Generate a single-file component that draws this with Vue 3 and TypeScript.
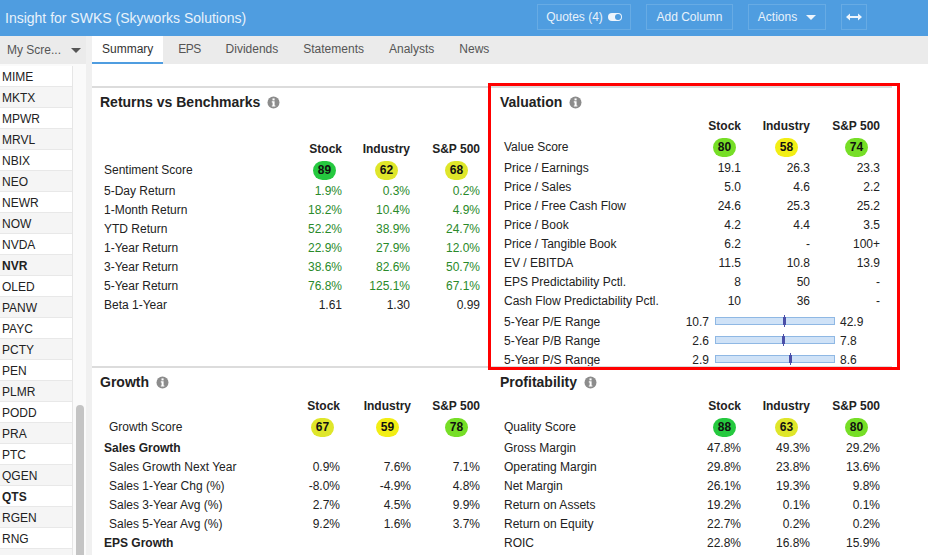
<script setup lang="ts">
interface Row {
  label: string;
  kind: 'score' | 'plain' | 'green' | 'group' | 'sub' | 'subscore' | 'range';
  values?: (string | number)[];
  low?: string;
  high?: string;
  pos?: number;
}

interface Panel {
  title: string;
  cls: string;
  rows: Row[];
}

const tickers = [
  'MIME', 'MKTX', 'MPWR', 'MRVL', 'NBIX', 'NEO', 'NEWR', 'NOW', 'NVDA', 'NVR', 'OLED', 'PANW',
  'PAYC', 'PCTY', 'PEN', 'PLMR', 'PODD', 'PRA', 'PTC', 'QGEN', 'QTS', 'RGEN', 'RNG', '',
];
const boldTickers = ['NVR', 'QTS'];
const tabs = ['Summary', 'EPS', 'Dividends', 'Statements', 'Analysts', 'News'];
const columns = ['Stock', 'Industry', 'S&P 500'];

const panels: Panel[] = [
  {
    title: 'Returns vs Benchmarks',
    cls: 'returns',
    rows: [
      { label: 'Sentiment Score', kind: 'score', values: [89, 62, 68] },
      { label: '5-Day Return', kind: 'green', values: ['1.9%', '0.3%', '0.2%'] },
      { label: '1-Month Return', kind: 'green', values: ['18.2%', '10.4%', '4.9%'] },
      { label: 'YTD Return', kind: 'green', values: ['52.2%', '38.9%', '24.7%'] },
      { label: '1-Year Return', kind: 'green', values: ['22.9%', '27.9%', '12.0%'] },
      { label: '3-Year Return', kind: 'green', values: ['38.6%', '82.6%', '50.7%'] },
      { label: '5-Year Return', kind: 'green', values: ['76.8%', '125.1%', '67.1%'] },
      { label: 'Beta 1-Year', kind: 'plain', values: ['1.61', '1.30', '0.99'] },
    ],
  },
  {
    title: 'Valuation',
    cls: 'side',
    rows: [
      { label: 'Value Score', kind: 'score', values: [80, 58, 74] },
      { label: 'Price / Earnings', kind: 'plain', values: ['19.1', '26.3', '23.3'] },
      { label: 'Price / Sales', kind: 'plain', values: ['5.0', '4.6', '2.2'] },
      { label: 'Price / Free Cash Flow', kind: 'plain', values: ['24.6', '25.3', '25.2'] },
      { label: 'Price / Book', kind: 'plain', values: ['4.2', '4.4', '3.5'] },
      { label: 'Price / Tangible Book', kind: 'plain', values: ['6.2', '-', '100+'] },
      { label: 'EV / EBITDA', kind: 'plain', values: ['11.5', '10.8', '13.9'] },
      { label: 'EPS Predictability Pctl.', kind: 'plain', values: ['8', '50', '-'] },
      { label: 'Cash Flow Predictability Pctl.', kind: 'plain', values: ['10', '36', '-'] },
      { label: '5-Year P/E Range', kind: 'range', low: '10.7', high: '42.9', pos: 57.6 },
      { label: '5-Year P/B Range', kind: 'range', low: '2.6', high: '7.8', pos: 57 },
      { label: '5-Year P/S Range', kind: 'range', low: '2.9', high: '8.6', pos: 62.6 },
    ],
  },
  {
    title: 'Growth',
    cls: 'growth',
    rows: [
      { label: 'Growth Score', kind: 'subscore', values: [67, 59, 78] },
      { label: 'Sales Growth', kind: 'group' },
      { label: 'Sales Growth Next Year', kind: 'sub', values: ['0.9%', '7.6%', '7.1%'] },
      { label: 'Sales 1-Year Chg (%)', kind: 'sub', values: ['-8.0%', '-4.9%', '4.8%'] },
      { label: 'Sales 3-Year Avg (%)', kind: 'sub', values: ['2.7%', '4.5%', '9.9%'] },
      { label: 'Sales 5-Year Avg (%)', kind: 'sub', values: ['9.2%', '1.6%', '3.7%'] },
      { label: 'EPS Growth', kind: 'group' },
    ],
  },
  {
    title: 'Profitability',
    cls: 'side',
    rows: [
      { label: 'Quality Score', kind: 'score', values: [88, 63, 80] },
      { label: 'Gross Margin', kind: 'plain', values: ['47.8%', '49.3%', '29.2%'] },
      { label: 'Operating Margin', kind: 'plain', values: ['29.8%', '23.8%', '13.6%'] },
      { label: 'Net Margin', kind: 'plain', values: ['26.1%', '19.3%', '9.8%'] },
      { label: 'Return on Assets', kind: 'plain', values: ['19.2%', '0.1%', '0.1%'] },
      { label: 'Return on Equity', kind: 'plain', values: ['22.7%', '0.2%', '0.2%'] },
      { label: 'ROIC', kind: 'plain', values: ['22.8%', '16.8%', '15.9%'] },
    ],
  },
];

const isScore = (row: Row) => row.kind === 'score' || row.kind === 'subscore';

const scoreClass = (score: number | string) => {
  const n = Number(score);
  if (n >= 85) return 'top';
  if (n >= 70) return 'high';
  if (n >= 60) return 'mid';
  return 'low';
};
</script>

<template>
  <div class="app">
    <header class="topbar">
      <div class="title">Insight for SWKS (Skyworks Solutions)</div>
      <div class="actions">
        <button class="btn quotes">
          Quotes (4)
          <span class="toggle"></span>
        </button>
        <button class="btn add">Add Column</button>
        <button class="btn act">
          Actions
          <span class="caret white"></span>
        </button>
        <button class="btn expand" aria-label="Expand">
          <svg width="16" height="8" viewBox="0 0 16 8">
            <path d="M0 4 L4 0.5 V3 H12 V0.5 L16 4 L12 7.5 V5 H4 V7.5 Z" fill="#eef5fc" />
          </svg>
        </button>
      </div>
    </header>

    <div class="body">
      <aside class="sidebar">
        <div class="screen-select">
          <span>My Scre...</span>
          <span class="caret"></span>
        </div>
        <div class="list-wrap">
          <ul class="tickers">
            <li
              v-for="t in tickers"
              :key="t"
              :class="{ bold: boldTickers.includes(t) }"
            >
              {{ t }}
            </li>
          </ul>
          <div class="scrolltrack">
            <div class="thumb"></div>
          </div>
        </div>
      </aside>

      <main class="main">
        <nav class="tabs">
          <a
            v-for="(tab, i) in tabs"
            :key="tab"
            class="tab"
            :class="{ active: i === 0 }"
          >{{ tab }}</a>
        </nav>

        <div class="panels">
          <section
            v-for="panel in panels"
            :key="panel.title"
            class="panel"
            :class="panel.cls"
          >
            <h3 class="panel-title">
              {{ panel.title }}
              <svg class="info" width="13" height="13" viewBox="0 0 13 13">
                <circle cx="6.5" cy="6.5" r="6" fill="#8c8c8c" />
                <rect x="5.5" y="2.4" width="2.1" height="2" fill="#fff" />
                <path d="M4.8 5.3 H7.6 V9.4 H8.4 V10.6 H4.8 V9.4 H5.6 V6.5 H4.8 Z" fill="#fff" />
              </svg>
            </h3>

            <div class="row head">
              <span></span>
              <span v-for="c in columns" :key="c" class="num">{{ c }}</span>
            </div>

            <template v-for="row in panel.rows" :key="row.label">
              <div v-if="row.kind === 'range'" class="range">
                <span class="range-label">{{ row.label }}</span>
                <span class="range-low">{{ row.low }}</span>
                <span class="range-bar">
                  <i class="marker" :style="{ left: row.pos + '%' }"></i>
                </span>
                <span class="range-high">{{ row.high }}</span>
              </div>
              <div
                v-else
                class="row"
                :class="row.kind"
              >
                <span class="label">{{ row.label }}</span>
                <template v-if="isScore(row)">
                  <span v-for="(v, i) in row.values" :key="i" class="num score-cell">
                    <b class="badge" :class="scoreClass(v)">{{ v }}</b>
                  </span>
                </template>
                <template v-else>
                  <span v-for="(v, i) in row.values" :key="i" class="num">{{ v }}</span>
                </template>
              </div>
            </template>
          </section>
        </div>
      </main>
    </div>

    <div class="highlight"></div>
  </div>
</template>

<style>
html,
body {
  margin: 0;
  overflow: hidden;
  background: #fff;
}
</style>

<style scoped>
.app {
  position: relative;
  width: 928px;
  height: 555px;
  overflow: hidden;
  font-family: "Liberation Sans", Arial, sans-serif;
  font-size: 12px;
  color: #222;
  background: #fff;
}

.topbar {
  display: flex;
  align-items: center;
  justify-content: space-between;
  height: 36px;
  padding: 0 61px 0 5px;
  background: #4f9de0;
  color: #e8f2fb;
}

.title {
  font-size: 14px;
}

.actions {
  display: flex;
  gap: 15px;
  margin-top: -2px;
}

.btn {
  display: flex;
  align-items: center;
  justify-content: center;
  gap: 5px;
  height: 26px;
  padding: 0;
  border: 1px solid #67abe4;
  background: transparent;
  color: #e8f2fb;
  font: inherit;
}

.quotes {
  width: 94px;
}

.add {
  width: 87px;
}

.act {
  width: 78px;
  gap: 9px;
}

.expand {
  width: 26px;
}

.toggle {
  position: relative;
  width: 14px;
  height: 8px;
  border-radius: 4px;
  background: #eef5fc;
}

.toggle::after {
  content: "";
  position: absolute;
  top: 1px;
  right: 1px;
  width: 6px;
  height: 6px;
  border-radius: 50%;
  background: #4f9de0;
}

.caret {
  display: inline-block;
  width: 0;
  height: 0;
  border-left: 5px solid transparent;
  border-right: 5px solid transparent;
  border-top: 5px solid #555;
}

.caret.white {
  border-top-color: #eef5fc;
}

.body {
  display: flex;
  height: 519px;
}

.sidebar {
  flex: 0 0 86px;
  border-right: 6px solid #f0f0f0;
  background: #fafafa;
}

.screen-select {
  display: flex;
  align-items: center;
  justify-content: space-between;
  height: 28px;
  padding: 0 5px 0 7px;
  margin-bottom: 2px;
  background: #ebebeb;
  color: #555;
}

.list-wrap {
  display: flex;
  height: 489px;
  overflow: hidden;
}

.tickers {
  flex: 0 0 72px;
  margin: 0;
  padding: 0;
  list-style: none;
  background: #fff;
  border-right: 1px solid #e6e6e6;
}

.tickers li {
  box-sizing: border-box;
  height: 21px;
  line-height: 22px;
  padding-left: 2px;
  border-bottom: 1px solid #e8e8e8;
}

.tickers li:nth-child(even) {
  background: #f5f5f5;
}

.tickers li.bold {
  font-weight: bold;
}

.scrolltrack {
  position: relative;
  flex: 1;
}

.thumb {
  position: absolute;
  top: 339px;
  left: 3px;
  width: 8px;
  height: 170px;
  border-radius: 4px;
  background: #c4c4c4;
}

.main {
  flex: 1;
  min-width: 0;
}

.tabs {
  display: flex;
  gap: 5px;
  height: 28px;
  background: #ebebeb;
}

.tab {
  box-sizing: border-box;
  height: 28px;
  padding: 0 10px;
  line-height: 27px;
  color: #555;
}

.tab:nth-child(2) {
  letter-spacing: -0.6px;
}

.tab.active {
  background: #fff;
  border-bottom: 2px solid #4f9de0;
  color: #333;
}

.panels {
  display: grid;
  grid-template-columns: 398px 402px;
  grid-template-rows: 280px auto;
  margin-top: 22px;
}

.panel {
  box-sizing: border-box;
  border-top: 2px solid #dcdcdc;
  padding: 0 10px 0 12px;
}

.panel.side {
  padding: 0 12px 0 14px;
}

.panel-title {
  display: flex;
  align-items: center;
  gap: 7px;
  height: 28px;
  margin: 0 0 0 -4px;
  font-size: 14px;
  font-weight: bold;
  color: #222;
}

.row {
  display: grid;
  grid-template-columns: 1fr 69px 69px 70px;
  align-items: center;
  height: 19px;
}

.returns .row {
  grid-template-columns: 1fr 68px 68px 70px;
}

.growth .row {
  grid-template-columns: 1fr 68px 71px 69px;
}

.returns .head {
  margin-top: 23px;
}

.row.head {
  height: 20px;
  font-weight: bold;
}

.row.score,
.row.subscore {
  height: 22px;
}

.row.group {
  font-weight: bold;
}

.row.sub .label,
.row.subscore .label {
  padding-left: 5px;
}

.row.green .num {
  color: #2a8a2a;
}

.num {
  text-align: right;
}

.score-cell {
  display: flex;
  justify-content: flex-end;
  padding-right: 12px;
}

.row .score-cell:nth-child(2) {
  padding-right: 5px;
}

.returns .row .score-cell:nth-child(2),
.growth .row .score-cell:nth-child(2) {
  padding-right: 6px;
}

.badge {
  width: 23px;
  height: 19px;
  border-radius: 10px;
  line-height: 19px;
  text-align: center;
  font-weight: bold;
  color: #111;
}

.badge.top {
  background: #25c93f;
}

.badge.high {
  background: #76de26;
}

.badge.mid {
  background: #dfe62a;
}

.badge.low {
  background: #f2ee14;
}

.range {
  display: flex;
  align-items: center;
  height: 19px;
}

.row + .range {
  margin-top: 2px;
}

.range-label {
  flex: 0 0 165px;
}

.range-low {
  flex: 0 0 40px;
  text-align: right;
}

.range-bar {
  position: relative;
  box-sizing: border-box;
  flex: 0 0 120px;
  height: 8px;
  margin: -2px 5px 0 6px;
  background: #cfe2f7;
  border: 1px solid #8fb8e4;
}

.marker {
  position: absolute;
  top: -3px;
  width: 1px;
  height: 12px;
  background: #4a4fa8;
}

.marker::after {
  content: "";
  position: absolute;
  top: 2px;
  left: -1px;
  width: 3px;
  height: 8px;
  background: #4a4fa8;
}

.highlight {
  position: absolute;
  top: 83px;
  left: 488px;
  box-sizing: border-box;
  width: 412px;
  height: 287px;
  border: 3px solid #f00;
  pointer-events: none;
}
</style>
